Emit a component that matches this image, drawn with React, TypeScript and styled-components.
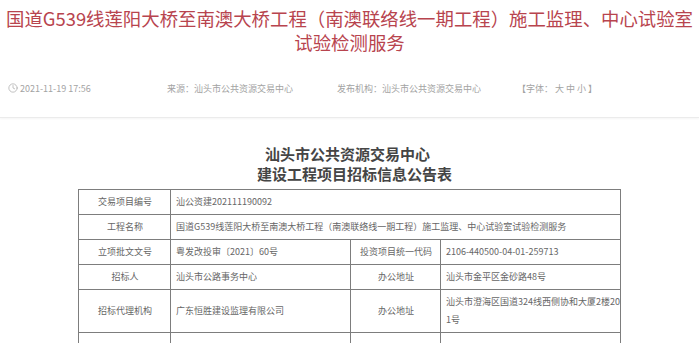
import styled, { createGlobalStyle } from 'styled-components';
import { Clock } from 'lucide-react';

const GlobalStyle = createGlobalStyle`
  body {
    margin: 0;
    background: #fff;
    font-family: "Noto Sans CJK SC", "Noto Sans", sans-serif;
  }
`;

const Page = styled.div`
  width: 699px;
`;

const Title = styled.h1`
  margin: 0;
  padding-top: 6px;
  font-size: 18.4px;
  font-weight: normal;
  line-height: 24px;
  color: #b8444e;
  text-align: center;
`;

const Line = styled.span<{ $shift?: number }>`
  display: block;
  white-space: nowrap;
  padding-left: ${(p) => (p.$shift && p.$shift > 0 ? p.$shift : 0)}px;
  padding-right: ${(p) => (p.$shift && p.$shift < 0 ? -p.$shift : 0)}px;
`;

const Meta = styled.div`
  display: flex;
  align-items: center;
  margin-top: 27px;
  padding-left: 8px;
  height: 14px;
  font-size: 9px;
  color: #a3a3a3;
`;

const MetaItem = styled.div<{ $w?: number }>`
  display: flex;
  align-items: center;
  gap: 2px;
  flex-shrink: 0;
  white-space: nowrap;
  width: ${(p) => (p.$w ? `${p.$w}px` : 'auto')};
`;

const Divider = styled.div`
  margin-top: 22px;
  height: 1px;
  background: #ebebeb;
  box-shadow: 0 1px 2px rgba(0, 0, 0, 0.06);
`;

const SubTitle = styled.h2`
  margin: 26px 0 0;
  font-size: 15px;
  line-height: 20px;
  font-weight: bold;
  color: #454545;
  text-align: center;
`;

const Table = styled.table`
  margin: 5px auto 0;
  width: 542px;
  border-collapse: collapse;
  table-layout: fixed;
  font-size: 9px;
  color: #666;
`;

const Cell = styled.td<{ $label?: boolean; $breakAll?: boolean }>`
  border: 1px solid #7d7d7d;
  padding: 3px 4px 3px 5px;
  line-height: 18px;
  text-align: ${(p) => (p.$label ? 'center' : 'left')};
  word-break: ${(p) => (p.$breakAll ? 'break-all' : 'normal')};
  ${(p) => p.$breakAll && 'padding-right: 0;'}
`;

export default function App() {
  return (
    <Page>
      <GlobalStyle />
      <Title>
        <Line>国道G539线莲阳大桥至南澳大桥工程（南澳联络线一期工程）施工监理、中心试验室</Line>
        <Line>试验检测服务</Line>
      </Title>

      <Meta>
        <MetaItem $w={159}>
          <Clock size={10} strokeWidth={1.6} color="#a3a3a3" />
          2021-11-19 17:56
        </MetaItem>
        <MetaItem $w={170}>来源：汕头市公共资源交易中心</MetaItem>
        <MetaItem $w={180}>发布机构：汕头市公共资源交易中心</MetaItem>
        <MetaItem>【字体：&nbsp;大&nbsp;中&nbsp;小&nbsp;】</MetaItem>
      </Meta>
      <Divider />

      <SubTitle>
        <Line $shift={-4}>汕头市公共资源交易中心</Line>
        <Line $shift={10}>建设工程项目招标信息公告表</Line>
      </SubTitle>

      <Table>
        <colgroup>
          <col style={{ width: 92 }} />
          <col style={{ width: 180 }} />
          <col style={{ width: 90 }} />
          <col style={{ width: 180 }} />
        </colgroup>
        <tbody>
          <tr>
            <Cell $label>交易项目编号</Cell>
            <Cell colSpan={3}>汕公资建202111190092</Cell>
          </tr>
          <tr>
            <Cell $label>工程名称</Cell>
            <Cell colSpan={3}>
              国道G539线莲阳大桥至南澳大桥工程（南澳联络线一期工程）施工监理、中心试验室试验检测服务
            </Cell>
          </tr>
          <tr>
            <Cell $label>立项批文文号</Cell>
            <Cell>粤发改投审〔2021〕60号</Cell>
            <Cell $label>投资项目统一代码</Cell>
            <Cell>2106-440500-04-01-259713</Cell>
          </tr>
          <tr>
            <Cell $label>招标人</Cell>
            <Cell>汕头市公路事务中心</Cell>
            <Cell $label>办公地址</Cell>
            <Cell>汕头市金平区金砂路48号</Cell>
          </tr>
          <tr>
            <Cell $label>招标代理机构</Cell>
            <Cell>广东恒胜建设监理有限公司</Cell>
            <Cell $label>办公地址</Cell>
            <Cell $breakAll>汕头市澄海区国道324线西侧协和大厦2楼201号</Cell>
          </tr>
          <tr>
            <Cell $label>&nbsp;</Cell>
            <Cell>&nbsp;</Cell>
            <Cell $label>&nbsp;</Cell>
            <Cell>&nbsp;</Cell>
          </tr>
        </tbody>
      </Table>
    </Page>
  );
}
